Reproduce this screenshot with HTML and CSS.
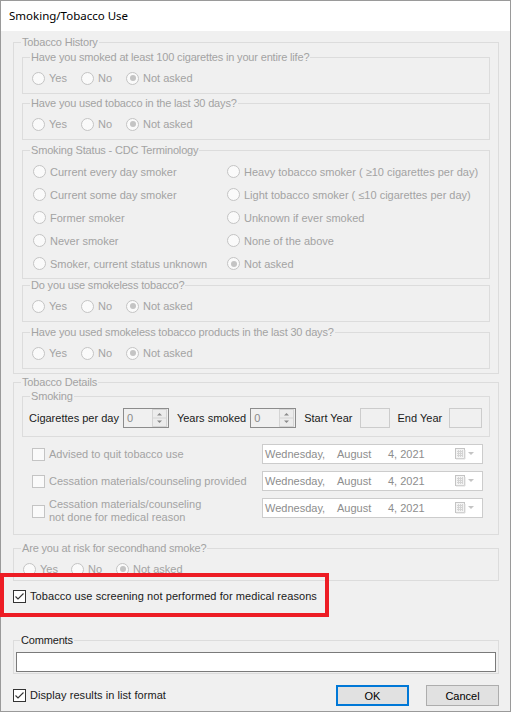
FILE: index.html
```html
<!DOCTYPE html>
<html lang="en">
<head>
    <meta charset="UTF-8">
    <meta name="viewport" content="width=device-width, initial-scale=1.0">
    <title>Smoking/Tobacco Use</title>
    <link rel="stylesheet" href="styles.css">
</head>
<body>
    <div class="window">
        <div class="titlebar">Smoking/Tobacco Use</div>
        <div class="content">

            <fieldset class="group history">
                <legend>Tobacco History</legend>

                <fieldset class="group sub q1">
                    <legend>Have you smoked at least 100 cigarettes in your entire life?</legend>
                    <div class="choices">
                        <span class="opt yes"><span class="radio"></span>Yes</span>
                        <span class="opt no"><span class="radio"></span>No</span>
                        <span class="opt"><span class="radio checked"></span>Not asked</span>
                    </div>
                </fieldset>

                <fieldset class="group sub q2">
                    <legend>Have you used tobacco in the last 30 days?</legend>
                    <div class="choices">
                        <span class="opt yes"><span class="radio"></span>Yes</span>
                        <span class="opt no"><span class="radio"></span>No</span>
                        <span class="opt"><span class="radio checked"></span>Not asked</span>
                    </div>
                </fieldset>

                <fieldset class="group sub status">
                    <legend>Smoking Status - CDC Terminology</legend>
                    <div class="status-grid">
                        <span class="opt"><span class="radio"></span>Current every day smoker</span>
                        <span class="opt"><span class="radio"></span>Heavy tobacco smoker ( &ge;10 cigarettes per day)</span>
                        <span class="opt"><span class="radio"></span>Current some day smoker</span>
                        <span class="opt"><span class="radio"></span>Light tobacco smoker ( &le;10 cigarettes per day)</span>
                        <span class="opt"><span class="radio"></span>Former smoker</span>
                        <span class="opt"><span class="radio"></span>Unknown if ever smoked</span>
                        <span class="opt"><span class="radio"></span>Never smoker</span>
                        <span class="opt"><span class="radio"></span>None of the above</span>
                        <span class="opt"><span class="radio"></span>Smoker, current status unknown</span>
                        <span class="opt"><span class="radio checked"></span>Not asked</span>
                    </div>
                </fieldset>

                <fieldset class="group sub q4">
                    <legend>Do you use smokeless tobacco?</legend>
                    <div class="choices">
                        <span class="opt yes"><span class="radio"></span>Yes</span>
                        <span class="opt no"><span class="radio"></span>No</span>
                        <span class="opt"><span class="radio checked"></span>Not asked</span>
                    </div>
                </fieldset>

                <fieldset class="group sub q5">
                    <legend>Have you used smokeless tobacco products in the last 30 days?</legend>
                    <div class="choices">
                        <span class="opt yes"><span class="radio"></span>Yes</span>
                        <span class="opt no"><span class="radio"></span>No</span>
                        <span class="opt"><span class="radio checked"></span>Not asked</span>
                    </div>
                </fieldset>
            </fieldset>

            <fieldset class="group details">
                <legend>Tobacco Details</legend>

                <fieldset class="group smoking">
                    <legend>Smoking</legend>
                    <div class="smoking-row">
                        <span class="field-label">Cigarettes per day</span>
                        <span class="spin">
                            <span class="spin-value">0</span>
                            <svg class="spin-buttons" width="15" height="18" viewBox="0 0 15 18">
                                <rect x="0.5" y="0.5" width="14" height="17" fill="#ececec" stroke="#d4d4d4"/>
                                <line x1="1" y1="9" x2="14" y2="9" stroke="#d4d4d4"/>
                                <path d="M5 6.5 L7.5 4 L10 6.5 Z" fill="#8a8a8a"/>
                                <path d="M5 11.5 L7.5 14 L10 11.5 Z" fill="#8a8a8a"/>
                            </svg>
                        </span>
                        <span class="field-label gap">Years smoked</span>
                        <span class="spin">
                            <span class="spin-value">0</span>
                            <svg class="spin-buttons" width="15" height="18" viewBox="0 0 15 18">
                                <rect x="0.5" y="0.5" width="14" height="17" fill="#ececec" stroke="#d4d4d4"/>
                                <line x1="1" y1="9" x2="14" y2="9" stroke="#d4d4d4"/>
                                <path d="M5 6.5 L7.5 4 L10 6.5 Z" fill="#8a8a8a"/>
                                <path d="M5 11.5 L7.5 14 L10 11.5 Z" fill="#8a8a8a"/>
                            </svg>
                        </span>
                        <span class="field-label gap">Start Year</span>
                        <span class="year-box start"></span>
                        <span class="field-label gap">End Year</span>
                        <span class="year-box end"></span>
                    </div>
                </fieldset>

                <div class="advice-grid">
                    <span class="check-label"><span class="checkbox"></span>Advised to quit tobacco use</span>
                    <span class="date-picker">
                        <span class="dp-day">Wednesday,</span><span class="dp-month">August</span><span class="dp-year">4, 2021</span>
                        <svg class="dp-icon" width="20" height="12" viewBox="0 0 20 12">
                            <rect x="0.5" y="0.5" width="9" height="10" fill="#f4f4f4" stroke="#c4c4c4"/>
                            <path d="M2 3.5 H8 M2 5.5 H8 M2 7.5 H8 M3.5 2 V9 M5.5 2 V9 M7.5 2 V9" stroke="#d4d4d4"/>
                            <path d="M10 2 V11 H1" fill="none" stroke="#dedede"/>
                            <path d="M13 4 L19 4 L16 7 Z" fill="#c4c4c4"/>
                        </svg>
                    </span>

                    <span class="check-label"><span class="checkbox"></span>Cessation materials/counseling provided</span>
                    <span class="date-picker">
                        <span class="dp-day">Wednesday,</span><span class="dp-month">August</span><span class="dp-year">4, 2021</span>
                        <svg class="dp-icon" width="20" height="12" viewBox="0 0 20 12">
                            <rect x="0.5" y="0.5" width="9" height="10" fill="#f4f4f4" stroke="#c4c4c4"/>
                            <path d="M2 3.5 H8 M2 5.5 H8 M2 7.5 H8 M3.5 2 V9 M5.5 2 V9 M7.5 2 V9" stroke="#d4d4d4"/>
                            <path d="M10 2 V11 H1" fill="none" stroke="#dedede"/>
                            <path d="M13 4 L19 4 L16 7 Z" fill="#c4c4c4"/>
                        </svg>
                    </span>

                    <span class="check-label"><span class="checkbox"></span><span>Cessation materials/counseling<br>not done for medical reason</span></span>
                    <span class="date-picker top">
                        <span class="dp-day">Wednesday,</span><span class="dp-month">August</span><span class="dp-year">4, 2021</span>
                        <svg class="dp-icon" width="20" height="12" viewBox="0 0 20 12">
                            <rect x="0.5" y="0.5" width="9" height="10" fill="#f4f4f4" stroke="#c4c4c4"/>
                            <path d="M2 3.5 H8 M2 5.5 H8 M2 7.5 H8 M3.5 2 V9 M5.5 2 V9 M7.5 2 V9" stroke="#d4d4d4"/>
                            <path d="M10 2 V11 H1" fill="none" stroke="#dedede"/>
                            <path d="M13 4 L19 4 L16 7 Z" fill="#c4c4c4"/>
                        </svg>
                    </span>
                </div>
            </fieldset>

            <fieldset class="group secondhand">
                <legend>Are you at risk for secondhand smoke?</legend>
                <div class="choices">
                    <span class="opt yes2"><span class="radio"></span>Yes</span>
                    <span class="opt no"><span class="radio"></span>No</span>
                    <span class="opt"><span class="radio checked"></span>Not asked</span>
                </div>
            </fieldset>

            <div class="screening">
                <span class="check-label on">
                    <span class="checkbox checked">
                        <svg width="11" height="11" viewBox="0 0 11 11"><path d="M1.5 5.5 L4 8 L9.5 2.5" fill="none" stroke="#333" stroke-width="1.1"/></svg>
                    </span>Tobacco use screening not performed for medical reasons
                </span>
                <span class="highlight"></span>
            </div>

            <fieldset class="group comments">
                <legend>Comments</legend>
                <div class="comment-box"></div>
            </fieldset>

            <div class="footer">
                <span class="check-label on">
                    <span class="checkbox checked">
                        <svg width="11" height="11" viewBox="0 0 11 11"><path d="M1.5 5.5 L4 8 L9.5 2.5" fill="none" stroke="#333" stroke-width="1.1"/></svg>
                    </span>Display results in list format
                </span>
                <span class="buttons">
                    <button class="btn default">OK</button>
                    <button class="btn">Cancel</button>
                </span>
            </div>
        </div>
    </div>
</body>
</html>
```

FILE: styles.css
```css
:root {
    --face: #f0f0f0;
    --frame: #dcdcdc;
    --disabled: #a3a3a3;
    --text: #1a1a1a;
    --font-ui: 'Liberation Sans', Arial, sans-serif;
    --font-title: 'Noto Sans', 'Liberation Sans', sans-serif;
}

* {
    box-sizing: border-box;
}

body {
    margin: 0;
    background-color: #fff;
    font-family: var(--font-ui);
    font-size: 11px;
    color: var(--text);
}

.window {
    position: relative;
    width: 511px;
    border: 1px solid #9a9a9a;
    background-color: var(--face);
}

.titlebar {
    height: 30px;
    padding-left: 8px;
    background-color: #fff;
    font-family: var(--font-title);
    font-size: 11.5px;
    line-height: 30px;
    color: #000;
}

.content {
    padding: 5px 11px 5px 12px;
}

/* group boxes */
.group {
    margin: 0;
    padding: 0 8px;
    min-width: 0;
    border: 1px solid var(--frame);
}

.group legend {
    margin-left: -1px;
    padding: 0 1px;
    line-height: 12px;
    letter-spacing: -0.17px;
    color: var(--disabled);
}

.history {
    padding-bottom: 4px;
}

.sub {
    padding: 0 8px 7px 9px;
}

.sub legend {
    margin-left: -2px;
}

.q1, .q2 {
    margin-top: 3px;
}

.status {
    margin-top: 4px;
    padding: 0 8px 3px 10px;
}

.status legend {
    margin-left: -3px;
}

.q5 {
    margin-top: 4px;
}

/* radios */
.choices {
    display: flex;
    height: 16px;
    margin-top: 7px;
}

.opt {
    display: flex;
    align-items: center;
    gap: 4px;
    color: var(--disabled);
    white-space: nowrap;
}

.opt.yes {
    width: 49px;
}

.opt.yes2 {
    width: 48px;
}

.opt.no {
    width: 45px;
}

.radio {
    position: relative;
    flex: none;
    width: 13px;
    height: 13px;
    border: 1px solid #c4c4c4;
    border-radius: 50%;
    background-color: #fafafa;
}

.radio.checked::after {
    content: '';
    position: absolute;
    left: 2.5px;
    top: 2.5px;
    width: 6px;
    height: 6px;
    border-radius: 50%;
    background-color: #c4c4c4;
}

.status-grid {
    display: grid;
    grid-template-columns: 194px 1fr;
    grid-auto-rows: 23px;
    margin-top: 4px;
}

/* tobacco details */
.details {
    margin-top: 2px;
    padding-bottom: 10px;
}

.smoking {
    margin-top: 2px;
    padding: 0 6px 8px 6px;
}

.smoking legend {
    margin-left: 1px;
}

.smoking-row {
    display: flex;
    align-items: center;
    height: 20px;
    margin-top: 6px;
}

.smoking-row > * {
    flex: none;
}

.field-label {
    margin-right: 4px;
    color: var(--text);
    white-space: nowrap;
}

.field-label.gap {
    margin-left: 8px;
}

.spin {
    display: flex;
    align-items: center;
    justify-content: space-between;
    width: 46px;
    height: 20px;
    padding: 0 1px 0 3px;
    border: 1px solid #8c8c8c;
    background-color: var(--face);
    color: #8a8a8a;
}

.year-box {
    height: 20px;
    margin-left: 3px;
    border: 1px solid #cccccc;
    background-color: var(--face);
}

.year-box.start {
    width: 30px;
}

.year-box.end {
    width: 33px;
}

.advice-grid {
    display: grid;
    grid-template-columns: 1fr 221px;
    grid-auto-rows: minmax(20px, auto);
    row-gap: 7px;
    align-items: center;
    margin-top: 7px;
    padding: 0 7px 0 10px;
}

.check-label {
    display: flex;
    align-items: center;
    gap: 4px;
    line-height: 13px;
    color: var(--disabled);
    white-space: nowrap;
}

.check-label.on {
    letter-spacing: 0.07px;
    color: var(--text);
}

.checkbox {
    display: flex;
    align-items: center;
    justify-content: center;
    flex: none;
    width: 13px;
    height: 13px;
    border: 1px solid #c4c4c4;
    background-color: #fafafa;
}

.checkbox.checked {
    border-color: #333;
    background-color: #fff;
}

.date-picker {
    display: flex;
    align-items: center;
    height: 20px;
    padding-left: 2px;
    border: 1px solid #cccccc;
    background-color: #fff;
    color: #8d8d8d;
}

.date-picker.top {
    align-self: start;
}

.dp-day {
    width: 72px;
}

.dp-month {
    width: 51px;
}

.dp-year {
    flex: 1;
}

.dp-icon {
    margin-right: 7px;
}

/* lower part */
.secondhand {
    margin-top: 7px;
    padding: 0 8px 3px 9px;
}

.secondhand legend {
    margin-left: -2px;
}

.screening {
    position: relative;
    height: 16px;
    margin-top: 7px;
    display: flex;
    align-items: center;
}

.highlight {
    position: absolute;
    left: -13px;
    top: -15px;
    width: 329px;
    height: 44px;
    border: 4px solid #ed1c24;
}

.comments {
    margin-top: 30px;
    padding: 0 2px 1px;
}

.comments legend {
    margin-left: 4px;
    color: var(--text);
}

.comment-box {
    height: 20px;
    margin-top: 6px;
    border: 1px solid #7a7a7a;
    background-color: #fff;
}

.footer {
    display: flex;
    align-items: center;
    justify-content: space-between;
    margin-top: 11px;
}

.buttons {
    display: flex;
    gap: 17px;
}

.btn {
    width: 73px;
    height: 21px;
    padding: 0;
    border: 1px solid #adadad;
    background-color: #e1e1e1;
    font-family: var(--font-ui);
    font-size: 11px;
    color: #000;
}

.btn.default {
    border: 2px solid #0078d7;
}
```
